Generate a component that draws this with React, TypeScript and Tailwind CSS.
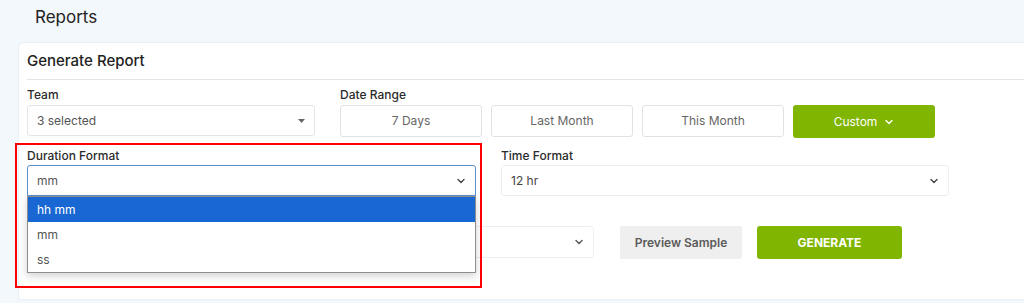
import React from 'react';

const font = { fontFamily: 'Inter, "Noto Sans", sans-serif' };

const Chevron = ({ className = '' }: { className?: string }) => (
  <svg className={className} width="10" height="10" viewBox="0 0 10 10" fill="none" aria-hidden="true">
    <path d="M2 3.5l3 3 3-3" stroke="currentColor" strokeWidth="1.4" strokeLinecap="round" strokeLinejoin="round" />
  </svg>
);

const Caret = () => (
  <svg width="7" height="4" viewBox="0 0 7 4" aria-hidden="true">
    <path d="M0 0h7L3.5 4z" fill="#666" />
  </svg>
);

const Label = ({ children }: { children: React.ReactNode }) => (
  <div className="h-[18px] text-[12px] font-medium leading-[18px] text-[#2b2b2b]">{children}</div>
);

const rangeButtons = ['7 Days', 'Last Month', 'This Month'];

export default function App() {
  return (
    <div className="relative h-[303px] w-[1024px] overflow-hidden bg-[#f3f8fc]" style={font}>
      <div className="flex h-[42px] items-start pl-[35px] pt-[5px] text-[17px] text-[#222]">Reports</div>

      <div className="ml-[18px] h-[258px] rounded-tl-md border border-r-0 border-[#eaf0f5] bg-white pl-[8px]">
        <div className="flex h-[36px] items-center text-[15px] font-medium text-[#222]">Generate Report</div>
        <div className="h-px bg-[#e3e6e9]" />

        {/* row 1 */}
        <div className="mt-[6px] flex gap-[25px]">
          <div className="w-[288px]">
            <Label>Team</Label>
            <div className="mt-[1px] flex h-[31px] items-center justify-between rounded-[3px] border border-[#e3e6ea] pl-[9px] pr-[9px] text-[12px] text-[#555]">
              <span>3 selected</span>
              <Caret />
            </div>
          </div>
          <div>
            <Label>Date Range</Label>
            <div className="mt-[1px] flex gap-[9px]">
              {rangeButtons.map((b) => (
                <div
                  key={b}
                  className="flex h-[32px] w-[142px] items-center justify-center rounded-[3px] border border-[#dfe2e6] text-[12px] text-[#666]"
                >
                  {b}
                </div>
              ))}
              <div className="flex h-[33px] w-[142px] items-center justify-center gap-[7px] rounded-[3px] bg-[#80b501] text-[12px] text-white">
                Custom
                <Chevron className="text-white" />
              </div>
            </div>
          </div>
        </div>

        {/* row 2 */}
        <div className="mt-[9px] flex gap-[25px]">
          <div className="w-[449px]">
            <Label>Duration Format</Label>
            <div className="flex h-[31px] items-center justify-between rounded-t-[3px] border border-[#5b8ecb] pl-[9px] pr-[9px] text-[12px] text-[#555]">
              <span>mm</span>
              <Chevron className="text-[#444]" />
            </div>
          </div>
          <div className="w-[448px]">
            <Label>Time Format</Label>
            <div className="flex h-[31px] items-center justify-between rounded-[3px] border border-[#eceff2] pl-[9px] pr-[9px] text-[12px] text-[#444]">
              <span>12 hr</span>
              <Chevron className="text-[#444]" />
            </div>
          </div>
        </div>

        {/* row 3 */}
        <div className="mt-[30px] flex items-start">
          <div className="flex h-[32px] w-[567px] items-center justify-end rounded-[3px] border border-[#eceff2] pr-[9px]">
            <Chevron className="text-[#555]" />
          </div>
          <div className="ml-[26px] flex h-[33px] w-[122px] items-center justify-center rounded-[2px] bg-[#efefef] text-[12px] font-semibold text-[#5b5b5b]">
            Preview Sample
          </div>
          <div className="ml-[15px] flex h-[33px] w-[145px] items-center justify-center rounded-[3px] bg-[#80b501] text-[12px] font-bold text-white">
            GENERATE
          </div>
        </div>
      </div>

      {/* open dropdown list */}
      <div className="absolute left-[27px] top-[196px] w-[449px] border border-[#8f8f8f] bg-white text-[12px] text-[#555] shadow-[0_3px_8px_rgba(0,0,0,0.18)]">
        <div className="flex h-[25px] items-center bg-[#1967d2] pl-[9px] text-white">hh mm</div>
        <div className="flex h-[25px] items-center pl-[9px]">mm</div>
        <div className="flex h-[25px] items-center pl-[9px]">ss</div>
      </div>

      {/* annotation box */}
      <div className="pointer-events-none absolute left-[15px] top-[143px] h-[145px] w-[467px] border-[2px] border-[#ff0000]" />
    </div>
  );
}
